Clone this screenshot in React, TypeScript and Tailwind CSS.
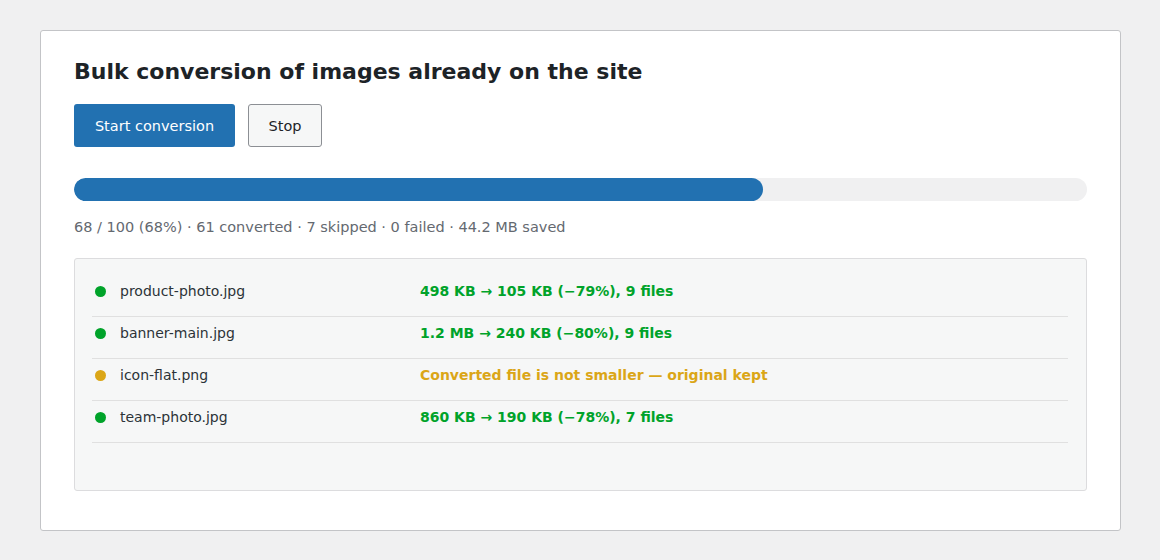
const rows = [
  { name: 'product-photo.jpg', status: '498 KB → 105 KB (−79%), 9 files', ok: true },
  { name: 'banner-main.jpg', status: '1.2 MB → 240 KB (−80%), 9 files', ok: true },
  { name: 'icon-flat.png', status: 'Converted file is not smaller — original kept', ok: false },
  { name: 'team-photo.jpg', status: '860 KB → 190 KB (−78%), 7 files', ok: true },
];

export default function App() {
  const done = 68;
  const total = 100;

  return (
    <div className="min-h-[560px] bg-[#f0f0f1] py-[30px] pl-10 pr-[39px] font-['DejaVu_Sans',sans-serif]">
      <div className="h-[501px] rounded-[3px] border border-[#c3c4c7] bg-white px-[33px] pt-[27px]">
        <h2 className="text-[22px] font-bold leading-[28px] text-[#1d2327]">
          Bulk conversion of images already on the site
        </h2>

        <div className="mt-[18px] flex gap-[13px]">
          <button className="h-[43px] w-[161px] rounded-[3px] bg-[#2271b1] pt-[2px] text-[14.5px] text-white">
            Start conversion
          </button>
          <button className="h-[43px] w-[74px] rounded-[3px] border border-[#8c8f94] bg-[#f6f7f7] pt-[2px] text-[14.5px] text-[#1d2327]">
            Stop
          </button>
        </div>

        <div className="mt-[31px] h-[23px] w-full overflow-hidden rounded-full bg-[#f0f0f1]">
          <div
            className="h-full rounded-full bg-[#2271b1]"
            style={{ width: `${(done / total) * 100}%` }}
          />
        </div>

        <p className="mt-[17px] text-[14.5px] leading-[18px] text-[#646970]">
          68 / 100 (68%) · 61 converted · 7 skipped · 0 failed · 44.2 MB saved
        </p>

        <div className="mt-[22px] h-[233px] rounded-[3px] border border-[#dcdcde] bg-[#f6f7f7] pl-[17px] pr-[18px] pt-[16px]">
          {rows.map((r) => (
            <div
              key={r.name}
              className="flex h-[42px] items-start border-b border-[#e0e0e0] pt-[7px] text-[14px] leading-[18px]"
            >
              <span
                className={
                  'ml-[3px] mt-[4px] h-[11px] w-[11px] shrink-0 rounded-full ' +
                  (r.ok ? 'bg-[#00a32a]' : 'bg-[#dba617]')
                }
              />
              <span className="ml-[14px] w-[300px] shrink-0 text-[#2c3338]">{r.name}</span>
              <span className={'font-bold ' + (r.ok ? 'text-[#00a32a]' : 'text-[#dba617]')}>
                {r.status}
              </span>
            </div>
          ))}
        </div>
      </div>
    </div>
  );
}
